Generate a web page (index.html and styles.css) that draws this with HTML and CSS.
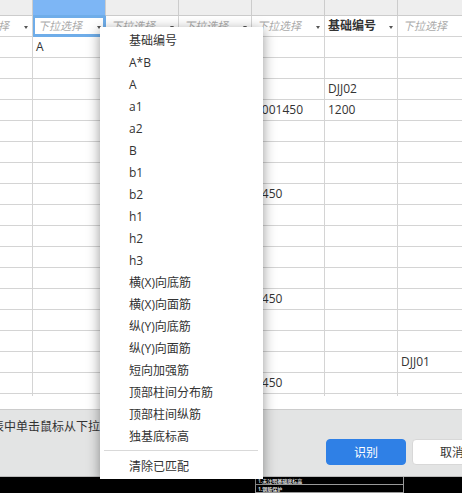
FILE: index.html
```html
<!DOCTYPE html>
<html lang="zh">
<head>
<meta charset="utf-8">
<title>识别</title>
<link rel="stylesheet" href="styles.css">
</head>
<body>
<div class="dialog">
  <div class="sheet">
    <div class="grid">
      <div class="row head"><i></i><i class="active"></i><i></i><i></i><i></i><i></i><i></i></div>
      <div class="row filter">
        <div class="cell"><span class="ph">下拉选择</span><b class="arrow"></b></div>
        <div class="cell selected"><span class="ph">下拉选择</span><b class="arrow"></b></div>
        <div class="cell"><span class="ph">下拉选择</span><b class="arrow"></b></div>
        <div class="cell"><span class="ph">下拉选择</span><b class="arrow"></b></div>
        <div class="cell"><span class="ph">下拉选择</span><b class="arrow"></b></div>
        <div class="cell"><span class="chosen">基础编号</span><b class="arrow"></b></div>
        <div class="cell"><span class="ph">下拉选择</span><b class="arrow"></b></div>
      </div>
      <div class="row"><div class="cell"></div><div class="cell">A</div><div class="cell"></div><div class="cell"></div><div class="cell"></div><div class="cell"></div><div class="cell"></div></div>
      <div class="row"><div class="cell"></div><div class="cell"></div><div class="cell"></div><div class="cell"></div><div class="cell"></div><div class="cell"></div><div class="cell"></div></div>
      <div class="row"><div class="cell"></div><div class="cell"></div><div class="cell"></div><div class="cell"></div><div class="cell"></div><div class="cell">DJJ02</div><div class="cell"></div></div>
      <div class="row"><div class="cell"></div><div class="cell"></div><div class="cell"></div><div class="cell"></div><div class="cell">1001450</div><div class="cell">1200</div><div class="cell"></div></div>
      <div class="row"><div class="cell"></div><div class="cell"></div><div class="cell"></div><div class="cell"></div><div class="cell"></div><div class="cell"></div><div class="cell"></div></div>
      <div class="row"><div class="cell"></div><div class="cell"></div><div class="cell"></div><div class="cell"></div><div class="cell"></div><div class="cell"></div><div class="cell"></div></div>
      <div class="row"><div class="cell"></div><div class="cell"></div><div class="cell"></div><div class="cell"></div><div class="cell"></div><div class="cell"></div><div class="cell"></div></div>
      <div class="row"><div class="cell"></div><div class="cell"></div><div class="cell"></div><div class="cell"></div><div class="cell">1450</div><div class="cell"></div><div class="cell"></div></div>
      <div class="row"><div class="cell"></div><div class="cell"></div><div class="cell"></div><div class="cell"></div><div class="cell"></div><div class="cell"></div><div class="cell"></div></div>
      <div class="row"><div class="cell"></div><div class="cell"></div><div class="cell"></div><div class="cell"></div><div class="cell"></div><div class="cell"></div><div class="cell"></div></div>
      <div class="row"><div class="cell"></div><div class="cell"></div><div class="cell"></div><div class="cell"></div><div class="cell"></div><div class="cell"></div><div class="cell"></div></div>
      <div class="row"><div class="cell"></div><div class="cell"></div><div class="cell"></div><div class="cell"></div><div class="cell"></div><div class="cell"></div><div class="cell"></div></div>
      <div class="row"><div class="cell"></div><div class="cell"></div><div class="cell"></div><div class="cell"></div><div class="cell">1450</div><div class="cell"></div><div class="cell"></div></div>
      <div class="row"><div class="cell"></div><div class="cell"></div><div class="cell"></div><div class="cell"></div><div class="cell"></div><div class="cell"></div><div class="cell"></div></div>
      <div class="row"><div class="cell"></div><div class="cell"></div><div class="cell"></div><div class="cell"></div><div class="cell"></div><div class="cell"></div><div class="cell"></div></div>
      <div class="row"><div class="cell"></div><div class="cell"></div><div class="cell"></div><div class="cell"></div><div class="cell"></div><div class="cell"></div><div class="cell">DJJ01</div></div>
      <div class="row"><div class="cell"></div><div class="cell"></div><div class="cell"></div><div class="cell"></div><div class="cell">1450</div><div class="cell"></div><div class="cell"></div></div>
      <div class="row"><div class="cell"></div><div class="cell"></div><div class="cell"></div><div class="cell"></div><div class="cell"></div><div class="cell"></div><div class="cell"></div></div>
    </div>
  </div>
  <div class="footer">
    <p class="hint">请在列表中单击鼠标从下拉框中选择对应列</p>
    <div class="actions">
      <button class="btn primary" type="button">识别</button>
      <button class="btn" type="button">取消</button>
    </div>
  </div>
  <div class="cad">
    <div class="cad-row">1.未注明基础底标高</div>
    <div class="cad-row">1.钢筋保护</div>
  </div>
</div>
<ul class="menu">
  <li>基础编号</li><li>A*B</li><li>A</li><li>a1</li><li>a2</li><li>B</li><li>b1</li><li>b2</li><li>h1</li><li>h2</li><li>h3</li>
  <li>横(X)向底筋</li><li>横(X)向面筋</li><li>纵(Y)向底筋</li><li>纵(Y)向面筋</li><li>短向加强筋</li><li>顶部柱间分布筋</li><li>顶部柱间纵筋</li><li>独基底标高</li>
  <li class="sep"></li>
  <li>清除已匹配</li>
</ul>
</body>
</html>
```
FILE: styles.css
```css
* { box-sizing: border-box; }
html, body { margin: 0; padding: 0; }
body {
  width: 462px;
  height: 493px;
  overflow: hidden;
  position: relative;
  background: #000;
  font-family: "Open Sans", "Noto Sans CJK SC", sans-serif;
  font-size: 12px;
  color: #333;
}
.dialog { display: flex; flex-direction: column; height: 493px; }
.sheet { height: 409px; flex: none; background: #fff; overflow: hidden; }
.grid { height: 396px; overflow: hidden; margin-left: -40px; width: 511px; }
.row { display: grid; grid-template-columns: repeat(7, 73px); height: 21px; }
.row.head { height: 16px; background: #eee; }
.row.head i { display: block; border-right: 1px solid #ccc; border-bottom: 1px solid #ccc; }
.row.head i.active { background: #7db6f5; border-bottom-color: #6fade9; }
.cell {
  display: flex;
  align-items: center;
  justify-content: space-between;
  border-right: 1px solid #d4d4d4;
  border-bottom: 1px solid #d4d4d4;
  padding: 0 4px 0 3px;
  line-height: 20px;
  white-space: nowrap;
}
.filter .cell.selected { box-shadow: inset 0 0 0 2px #6fade9; border-color: #6fade9; }
.ph { font-size: 11px; font-style: italic; color: #aaa; margin-left: 2px; }
.chosen { font-weight: 700; color: #333; }
.arrow {
  flex: none;
  width: 0;
  height: 0;
  border-left: 2.5px solid transparent;
  border-right: 2.5px solid transparent;
  border-top: 3px solid #555;
  margin-top: 2px;
}
.footer {
  flex: none;
  height: 68px;
  margin-left: -46px;
  width: 538px;
  background: #e3e4e4;
  border-top: 1px solid #ccc;
  border-bottom: 1px solid #bbb;
  display: flex;
  flex-direction: column;
}
.hint { margin: 7px 0 0 2px; line-height: 20px; white-space: nowrap; }
.actions { display: flex; justify-content: flex-end; gap: 6px; margin-top: 2px; }
.btn {
  width: 80px;
  height: 26px;
  border: 1px solid #d8d8d8;
  border-radius: 4px;
  background: #fff;
  color: #333;
  font: inherit;
  padding: 0;
}
.btn.primary { background: #2f80e6; border-color: #2f80e6; color: #fff; }
.cad {
  flex: none;
  margin-left: 255px;
  width: 149px;
  height: 16px;
  border-left: 1px solid #999;
  border-right: 1px solid #999;
}
.cad-row {
  height: 8px;
  border-bottom: 1px solid #999;
  color: #ddd;
  font-size: 5px;
  font-weight: 700;
  line-height: 8px;
  padding-left: 2px;
  white-space: nowrap;
  overflow: hidden;
}
.menu {
  position: absolute;
  left: 100px;
  top: 27px;
  width: 163px;
  height: 452px;
  margin: 0;
  padding: 3px 0 0;
  list-style: none;
  background: #fff;
  box-shadow: 0 3px 12px rgba(0, 0, 0, .42);
}
.menu li { height: 22px; line-height: 22px; padding-left: 29px; color: #333; white-space: nowrap; }
.menu li.sep { height: 1px; margin: 2px 5px 5px 4px; padding: 0; background: #d9d9d9; }
```
